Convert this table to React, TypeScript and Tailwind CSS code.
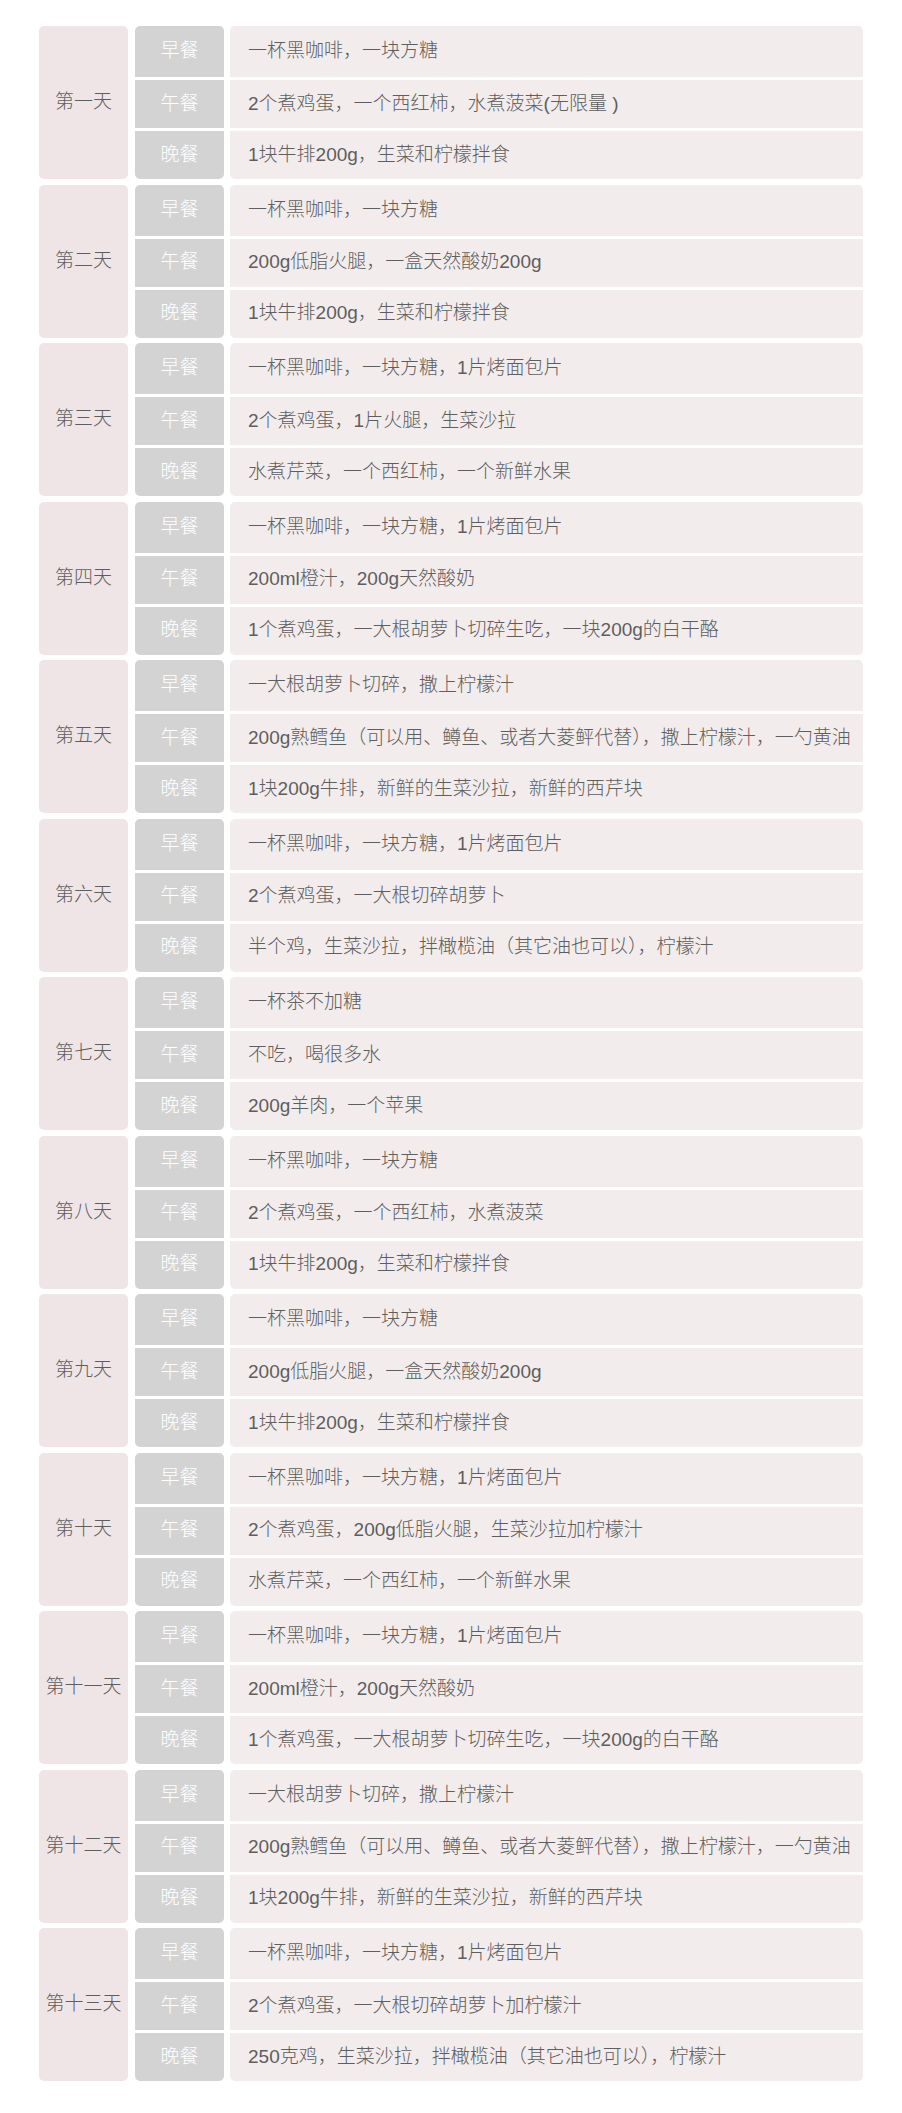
const days: { name: string; meals: [string, string, string] }[] = [
  {
    name: "第一天",
    meals: ["一杯黑咖啡，一块方糖", "2个煮鸡蛋，一个西红柿，水煮菠菜(无限量 )", "1块牛排200g，生菜和柠檬拌食"],
  },
  {
    name: "第二天",
    meals: ["一杯黑咖啡，一块方糖", "200g低脂火腿，一盒天然酸奶200g", "1块牛排200g，生菜和柠檬拌食"],
  },
  {
    name: "第三天",
    meals: ["一杯黑咖啡，一块方糖，1片烤面包片", "2个煮鸡蛋，1片火腿，生菜沙拉", "水煮芹菜，一个西红柿，一个新鲜水果"],
  },
  {
    name: "第四天",
    meals: ["一杯黑咖啡，一块方糖，1片烤面包片", "200ml橙汁，200g天然酸奶", "1个煮鸡蛋，一大根胡萝卜切碎生吃，一块200g的白干酪"],
  },
  {
    name: "第五天",
    meals: [
      "一大根胡萝卜切碎，撒上柠檬汁",
      "200g熟鳕鱼（可以用、鳟鱼、或者大菱鲆代替），撒上柠檬汁，一勺黄油",
      "1块200g牛排，新鲜的生菜沙拉，新鲜的西芹块",
    ],
  },
  {
    name: "第六天",
    meals: ["一杯黑咖啡，一块方糖，1片烤面包片", "2个煮鸡蛋，一大根切碎胡萝卜", "半个鸡，生菜沙拉，拌橄榄油（其它油也可以），柠檬汁"],
  },
  {
    name: "第七天",
    meals: ["一杯茶不加糖", "不吃，喝很多水", "200g羊肉，一个苹果"],
  },
  {
    name: "第八天",
    meals: ["一杯黑咖啡，一块方糖", "2个煮鸡蛋，一个西红柿，水煮菠菜", "1块牛排200g，生菜和柠檬拌食"],
  },
  {
    name: "第九天",
    meals: ["一杯黑咖啡，一块方糖", "200g低脂火腿，一盒天然酸奶200g", "1块牛排200g，生菜和柠檬拌食"],
  },
  {
    name: "第十天",
    meals: ["一杯黑咖啡，一块方糖，1片烤面包片", "2个煮鸡蛋，200g低脂火腿，生菜沙拉加柠檬汁", "水煮芹菜，一个西红柿，一个新鲜水果"],
  },
  {
    name: "第十一天",
    meals: ["一杯黑咖啡，一块方糖，1片烤面包片", "200ml橙汁，200g天然酸奶", "1个煮鸡蛋，一大根胡萝卜切碎生吃，一块200g的白干酪"],
  },
  {
    name: "第十二天",
    meals: [
      "一大根胡萝卜切碎，撒上柠檬汁",
      "200g熟鳕鱼（可以用、鳟鱼、或者大菱鲆代替），撒上柠檬汁，一勺黄油",
      "1块200g牛排，新鲜的生菜沙拉，新鲜的西芹块",
    ],
  },
  {
    name: "第十三天",
    meals: ["一杯黑咖啡，一块方糖，1片烤面包片", "2个煮鸡蛋，一大根切碎胡萝卜加柠檬汁", "250克鸡，生菜沙拉，拌橄榄油（其它油也可以），柠檬汁"],
  },
];

const mealNames = ["早餐", "午餐", "晚餐"];

export default function App() {
  return (
    <div
      className="w-[902px] bg-white px-[39px] pt-[26px] pb-[32px] flex flex-col gap-[5.5px] text-[19px] font-light text-[#5e5e5e]"
      style={{ fontFamily: '"Liberation Sans", "Noto Sans CJK SC", sans-serif' }}
    >
      {days.map((day) => (
        <div key={day.name} className="flex h-[153px]">
          <div className="w-[89px] shrink-0 rounded-[5px] bg-[#efe5e7] flex items-center justify-center">
            {day.name}
          </div>
          <div className="ml-[7px] w-[89px] shrink-0 rounded-[5px] overflow-hidden flex flex-col gap-[3px]">
            {mealNames.map((m, i) => (
              <div
                key={m}
                className={
                  i === 0
                    ? "h-[51px] bg-[#d3d3d3] text-white flex items-center justify-center"
                    : "flex-1 bg-[#d3d3d3] text-white flex items-center justify-center"
                }
              >
                {m}
              </div>
            ))}
          </div>
          <div className="ml-[6px] flex-1 rounded-[5px] overflow-hidden flex flex-col gap-[3px]">
            {day.meals.map((text, i) => (
              <div
                key={i}
                className={
                  i === 0
                    ? "h-[51px] bg-[#f2ecec] flex items-center pl-[18px] whitespace-nowrap"
                    : "flex-1 bg-[#f2ecec] flex items-center pl-[18px] whitespace-nowrap"
                }
              >
                {text}
              </div>
            ))}
          </div>
        </div>
      ))}
    </div>
  );
}
